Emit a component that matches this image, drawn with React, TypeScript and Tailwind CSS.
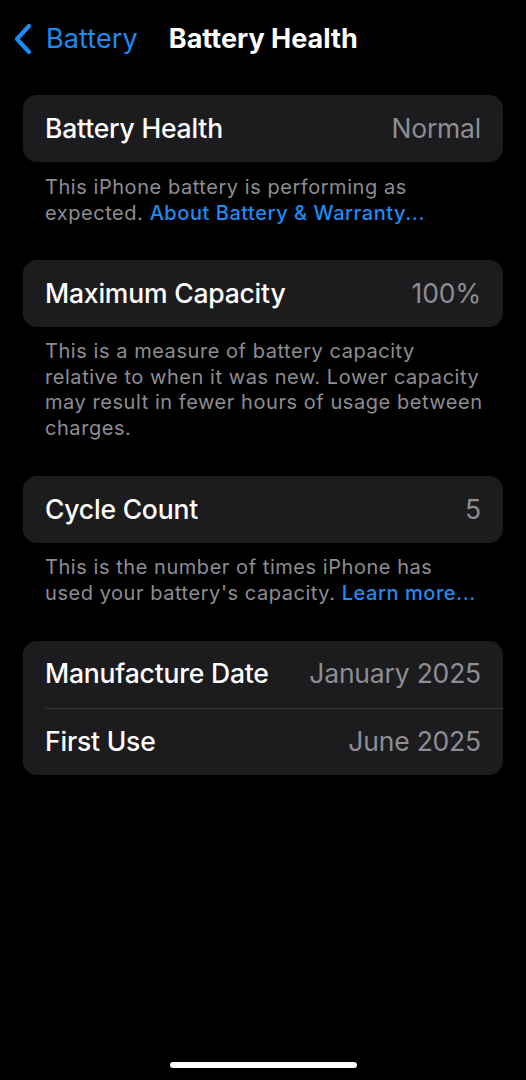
export default function App() {
  const font = { fontFamily: "Inter, 'Noto Sans', sans-serif" };
  return (
    <div
      className="relative flex h-[1080px] w-[526px] flex-col overflow-hidden bg-black text-white"
      style={font}
    >
      <header className="flex h-[78px] items-center pl-[12px]">
        <div className="flex items-center text-[#1c8cf5]">
          <svg width="22" height="32" viewBox="0 0 22 32" className="mr-[12px]">
            <path
              d="M17 3 L5 16 L17 29"
              fill="none"
              stroke="currentColor"
              strokeWidth="4.2"
              strokeLinecap="round"
              strokeLinejoin="round"
            />
          </svg>
          <span className="text-[27px] tracking-[0.1px]">Battery</span>
        </div>
        <h1 className="ml-[31px] text-[27px] font-bold tracking-[0px]">
          Battery Health
        </h1>
      </header>

      <main className="flex flex-col px-[23px] pt-[17px]">
        <section>
          <Row label="Battery Health" value="Normal" card />
          <p className="px-[22px] pt-[12px] text-[20px] leading-[26px] tracking-[0.55px] text-[#8d8d93]">
            This iPhone battery is performing as expected.{" "}
            <span className="font-medium text-[#1c8cf5]">About Battery &amp; Warranty...</span>
          </p>
        </section>

        <section className="mt-[34px]">
          <Row label="Maximum Capacity" value="100%" card />
          <p className="pl-[22px] pr-[18px] pt-[12px] text-[20px] leading-[25.5px] tracking-[0.55px] text-[#8d8d93]">
            This is a measure of battery capacity relative to when it was new. Lower
            capacity may result in fewer hours of usage between charges.
          </p>
        </section>

        <section className="mt-[35px]">
          <Row label="Cycle Count" value="5" card />
          <p className="px-[22px] pt-[12px] text-[20px] leading-[25.5px] tracking-[0.55px] text-[#8d8d93]">
            This is the number of times iPhone has used your battery's capacity.{" "}
            <span className="font-medium text-[#1c8cf5]">Learn more...</span>
          </p>
        </section>

        <section className="mt-[35px] overflow-hidden rounded-[14px] bg-[#1c1c1e]">
          <Row label="Manufacture Date" value="January 2025" />
          <div className="ml-[22px] h-px bg-[#38383a]" />
          <Row label="First Use" value="June 2025" />
        </section>
      </main>

      <div className="absolute bottom-[12px] left-[170px] h-[6px] w-[187px] rounded-full bg-white" />
    </div>
  );
}

function Row({ label, value, card }: { label: string; value: string; card?: boolean }) {
  return (
    <div
      className={
        card
          ? "flex h-[67px] items-center justify-between rounded-[14px] bg-[#1c1c1e] px-[22px]"
          : "flex h-[66.5px] items-center justify-between px-[22px]"
      }
    >
      <span className="text-[26.5px] font-medium tracking-[-0.2px]">{label}</span>
      <span className="text-[26.5px] tracking-[-0.2px] text-[#8d8d93]">{value}</span>
    </div>
  );
}
